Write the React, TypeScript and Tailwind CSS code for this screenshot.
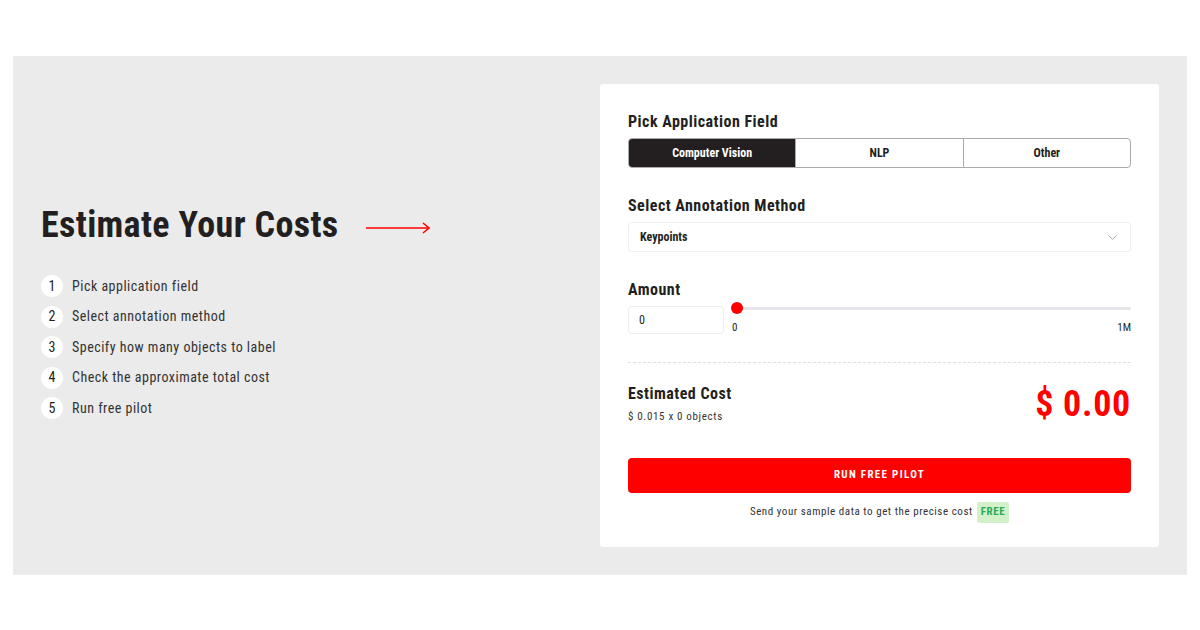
import { ChevronDown } from 'lucide-react';

const steps = [
  'Pick application field',
  'Select annotation method',
  'Specify how many objects to label',
  'Check the approximate total cost',
  'Run free pilot',
];

const fields = ['Computer Vision', 'NLP', 'Other'];

export default function App() {
  return (
    <div
      className="w-[1200px] h-[630px] bg-white pt-[56px] px-[13px] text-[#231f20]"
      style={{ fontFamily: '"Roboto Condensed", Roboto, "Liberation Sans", sans-serif' }}
    >
      <div className="h-[519px] bg-[#ebebeb] flex items-start">
        <div className="w-[587px] pl-[28px] pt-[147px]">
          <div className="flex items-center">
            <h1 className="text-[36px] leading-[44px] font-bold tracking-[0.01em]">Estimate Your Costs</h1>
            <svg width="64" height="12" viewBox="0 0 64 12" className="ml-[27px] mt-[6px]">
              <line x1="0" y1="6" x2="63" y2="6" stroke="#ff0000" strokeWidth="1.5" />
              <path d="M57 1 L63 6 L57 11" fill="none" stroke="#ff0000" strokeWidth="1.5" />
            </svg>
          </div>
          <ul className="mt-[28px] flex flex-col gap-[8.5px]">
            {steps.map((s, i) => (
              <li key={s} className="flex items-center h-[22px]">
                <span className="w-[22px] h-[22px] rounded-full bg-white flex items-center justify-center text-[14px]">
                  {i + 1}
                </span>
                <span className="ml-[9px] text-[14px] tracking-[0.035em] text-[#333]">{s}</span>
              </li>
            ))}
          </ul>
        </div>
        <div className="mt-[28px] w-[559px] bg-white rounded-[3px] px-[28px] pt-[27px] pb-[24px]">
          <div className="text-[16px] font-bold tracking-[0.03em] leading-[22px]">Pick Application Field</div>
          <div className="mt-[5px] flex h-[30px] border border-[#aaa] rounded-[4px] overflow-hidden">
            {fields.map((f, i) => (
              <div
                key={f}
                className={
                  i === 0
                    ? 'flex-1 flex items-center justify-center bg-[#231f20] text-white text-[12px] font-bold'
                    : 'flex-1 flex items-center justify-center border-l border-[#aaa] text-[12px] font-bold'
                }
              >
                {f}
              </div>
            ))}
          </div>

          <div className="mt-[27px] text-[16px] font-bold tracking-[0.03em] leading-[22px]">Select Annotation Method</div>
          <div className="mt-[5px] h-[30px] border border-[#f0f0f0] rounded-[3px] flex items-center justify-between pl-[11px] pr-[10px]">
            <span className="text-[12px] font-bold">Keypoints</span>
            <ChevronDown size={15} strokeWidth={1.5} className="text-[#9a9a9a]" />
          </div>

          <div className="mt-[27px] text-[16px] font-bold tracking-[0.03em] leading-[22px]">Amount</div>
          <div className="mt-[5px] flex items-start">
            <div className="w-[96px] h-[28px] border border-[#efefef] rounded-[3px] flex items-center pl-[10px] text-[12px]">0</div>
            <div className="ml-[11px] -mt-[4px] flex-1">
              <div className="relative h-[12px] flex items-center">
                <div className="w-full h-[3px] bg-[#e6e6ea] rounded-full" />
                <div className="absolute left-[-4px] top-0 w-[12px] h-[12px] rounded-full bg-[#ff0000]" />
              </div>
              <div className="mt-[6px] flex justify-between text-[11px]">
                <span className="-ml-[3px]">0</span>
                <span>1M</span>
              </div>
            </div>
          </div>

          <div className="mt-[25px] border-t border-dashed border-[#e0e0e0]" />

          <div className="mt-[20px] flex items-center justify-between">
            <div>
              <div className="text-[16px] font-bold tracking-[0.03em] leading-[22px]">Estimated Cost</div>
              <div className="mt-[4px] text-[11px] tracking-[0.06em] text-[#333]">$ 0.015 x 0 objects</div>
            </div>
            <div className="text-[36px] font-bold text-[#ff0000] leading-none tracking-[0.02em]">$ 0.00</div>
          </div>

          <button className="mt-[33px] w-full h-[35px] bg-[#ff0000] rounded-[4px] text-white text-[11px] font-bold tracking-[0.12em]">
            RUN FREE PILOT
          </button>
          <div className="mt-[9px] flex items-center justify-center gap-[4px] text-[11px] tracking-[0.05em] text-[#333]">
            <span>Send your sample data to get the precise cost</span>
            <span className="px-[4px] py-[2px] bg-[#d3f1c8] text-[#2ea85a] font-bold rounded-[2px]">FREE</span>
          </div>
        </div>
      </div>
    </div>
  );
}
